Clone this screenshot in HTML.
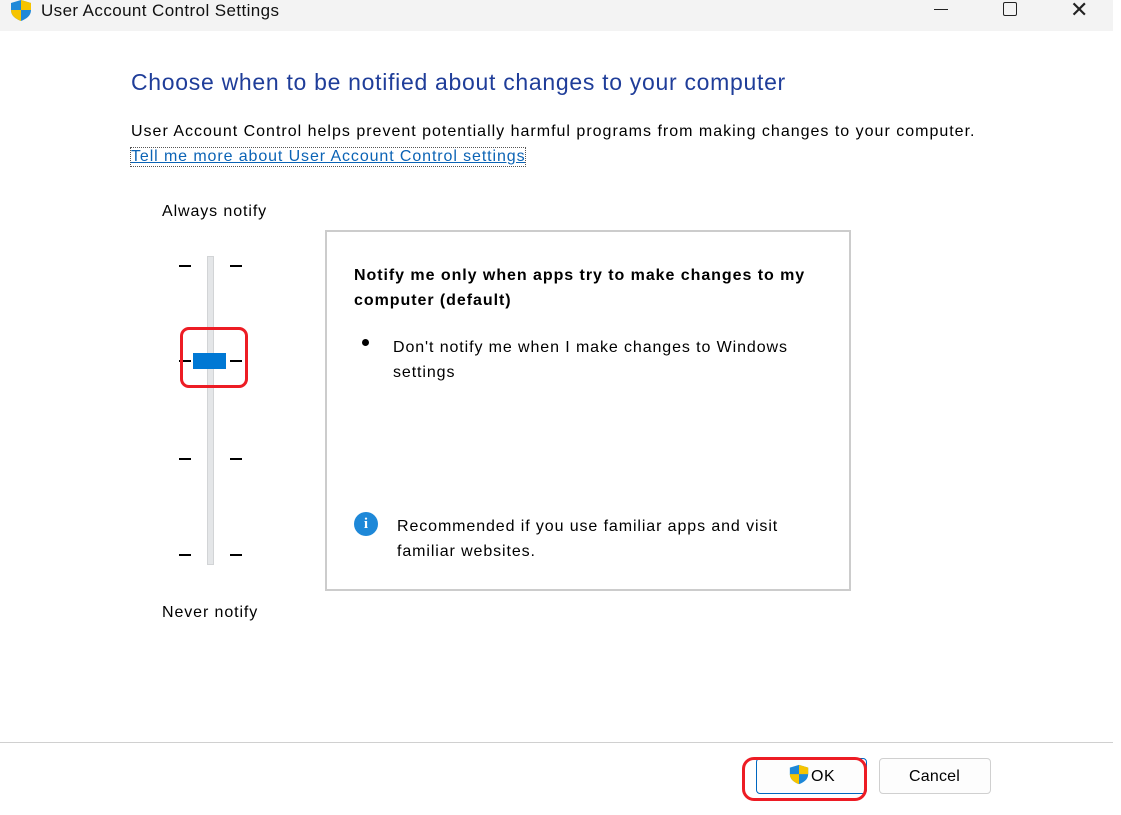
<!DOCTYPE html>
<html><head><style>
body{margin:0;width:1121px;height:815px;background:#fff;position:relative;overflow:hidden;font-family:"Liberation Sans",sans-serif;color:#000}
.a{position:absolute}
.t{font-size:15px;white-space:nowrap;letter-spacing:0.9px}
.tick{position:absolute;width:12px;height:2px;background:#000}
</style></head><body>
<div class="a" style="left:0;top:0;width:1113px;height:31px;background:#f3f3f3"></div>
<svg class="a" style="left:9px;top:0" width="24" height="22" viewBox="0 0 24 22"><path d="M12 0 L22 3 V10 C22 16 17 19 12 21 C7 19 2 16 2 10 V3 Z" fill="#1e88d8"/><path d="M12 0 L22 3 V10 H12Z" fill="#f6c400"/><path d="M2 10 H12 V21 C7 19 2 16 2 10Z" fill="#f6c400"/></svg>
<div class="a t" style="left:41px;top:1px;font-size:17px;color:#111;letter-spacing:0.4px">User Account Control Settings</div>
<div class="a" style="left:934px;top:9px;width:14px;height:1px;background:#222"></div>
<div class="a" style="left:1003px;top:2px;width:12px;height:12px;border:1.5px solid #222;border-radius:2px"></div>
<div class="a t" style="left:1070px;top:-3px;font-size:22px;color:#222;letter-spacing:0">✕</div>
<div class="a t" style="left:131px;top:69px;font-size:23px;color:#1f3d99;letter-spacing:0.7px">Choose when to be notified about changes to your computer</div>
<div class="a t" style="left:131px;top:123px;font-size:16px;letter-spacing:1px">User Account Control helps prevent potentially harmful programs from making changes to your computer.</div>
<div class="a t" style="left:131px;top:148px;font-size:16px;color:#0b63b5;text-decoration:underline;outline:1px dotted #555">Tell me more about User Account Control settings</div>
<div class="a t" style="left:162px;top:203px;font-size:16px">Always notify</div>
<div class="a t" style="left:162px;top:604px;font-size:16px">Never notify</div>
<div class="a" style="left:207px;top:256px;width:5px;height:307px;background:#e4e6e8;border:1px solid #d2d4d6"></div>
<div class="tick" style="left:179px;top:265px"></div><div class="tick" style="left:230px;top:265px"></div>
<div class="tick" style="left:179px;top:360px"></div><div class="tick" style="left:230px;top:360px"></div>
<div class="tick" style="left:179px;top:458px"></div><div class="tick" style="left:230px;top:458px"></div>
<div class="tick" style="left:179px;top:554px"></div><div class="tick" style="left:230px;top:554px"></div>
<div class="a" style="left:193px;top:353px;width:33px;height:16px;background:#0078d4"></div>
<div class="a" style="left:180px;top:327px;width:62px;height:55px;border:3.5px solid #ed1c24;border-radius:9px"></div>
<div class="a" style="left:325px;top:230px;width:522px;height:357px;border:2px solid #ccc"></div>
<div class="a t" style="left:354px;top:263px;font-size:16px;font-weight:bold;line-height:25px;white-space:normal;width:480px;letter-spacing:0.95px">Notify me only when apps try to make changes to my computer (default)</div>
<div class="a" style="left:362px;top:339px;width:7px;height:7px;border-radius:50%;background:#000"></div>
<div class="a t" style="left:393px;top:335px;font-size:16px;line-height:25px">Don't notify me when I make changes to Windows<br>settings</div>
<div class="a" style="left:354px;top:512px;width:24px;height:24px;border-radius:50%;background:#1e88d8;color:#fff;font-weight:bold;font-size:15px;text-align:center;line-height:24px;font-family:'Liberation Serif',serif">i</div>
<div class="a t" style="left:397px;top:514px;font-size:16px;line-height:25px">Recommended if you use familiar apps and visit<br>familiar websites.</div>
<div class="a" style="left:0;top:742px;width:1113px;height:1px;background:#d0d0d0"></div>
<div class="a" style="left:756px;top:758px;width:109px;height:34px;border:1px solid #0067c0;border-radius:4px;background:#fdfdfd"></div>
<svg class="a" style="left:788px;top:764px" width="22" height="22" viewBox="0 0 24 22"><path d="M12 0 L22 3 V10 C22 16 17 19 12 21 C7 19 2 16 2 10 V3 Z" fill="#1e88d8"/><path d="M12 0 L22 3 V10 H12Z" fill="#f6c400"/><path d="M2 10 H12 V21 C7 19 2 16 2 10Z" fill="#f6c400"/></svg>
<div class="a t" style="left:811px;top:768px;font-size:16px;letter-spacing:0.5px">OK</div>
<div class="a" style="left:879px;top:758px;width:110px;height:34px;border:1px solid #d0d0d0;border-radius:4px;background:#fdfdfd"></div>
<div class="a t" style="left:909px;top:768px;font-size:16px;letter-spacing:0.2px">Cancel</div>
<div class="a" style="left:742px;top:757px;width:119px;height:38px;border:3.5px solid #ed1c24;border-radius:12px"></div>
</body></html>
